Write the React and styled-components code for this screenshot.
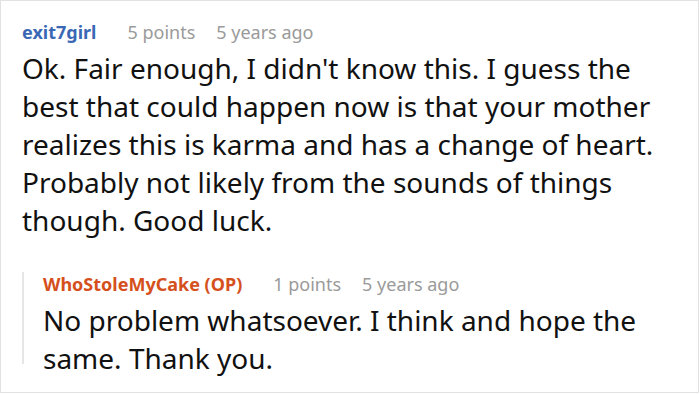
import React from "react";
import styled, { createGlobalStyle } from "styled-components";

const GlobalStyle = createGlobalStyle`
  body {
    margin: 0;
    background: #fff;
    font-family: "Noto Sans", "Open Sans", sans-serif;
  }
`;

const Card = styled.div`
  box-sizing: border-box;
  width: 699px;
  height: 393px;
  border: 1px solid #e2e2e2;
  padding: 19px 0 0 21px;
  overflow: hidden;
`;

const Meta = styled.div`
  display: flex;
  align-items: center;
  height: 24px;
  font-size: 18px;
  line-height: 24px;
  white-space: nowrap;
  margin-top: ${(p) => p.$shift || 0}px;
`;

const Author = styled.span`
  font-weight: 700;
  color: ${(p) => (p.$op ? "#d5501c" : "#3a68b5")};
  margin-right: 31px;
`;

const Info = styled.span`
  color: #9a9a9a;
  margin-right: 21px;
`;

const Body = styled.p`
  margin: 5px 0 0;
  font-size: 28px;
  line-height: 38px;
  color: #111;
  max-width: ${(p) => p.$width}px;
`;

const Reply = styled.div`
  box-sizing: border-box;
  margin-top: 44px;
  height: 92px;
  border-left: 2px solid #e6e6e6;
  padding-left: 19px;
`;

const Comment = ({ author, op, points, age, text, width, shift }) => (
  <>
    <Meta $shift={shift}>
      <Author $op={op}>{author}</Author>
      <Info>{points} points</Info>
      <Info>{age}</Info>
    </Meta>
    <Body $width={width}>{text}</Body>
  </>
);

export default function App() {
  return (
    <>
      <GlobalStyle />
      <Card>
        <Comment
          author="exit7girl"
          points={5}
          age="5 years ago"
          width={655}
          text="Ok. Fair enough, I didn't know this. I guess the best that could happen now is that your mother realizes this is karma and has a change of heart. Probably not likely from the sounds of things though. Good luck."
        />
        <Reply>
          <Comment
            author="WhoStoleMyCake (OP)"
            op
            points={1}
            age="5 years ago"
            width={630}
            shift={-11}
            text="No problem whatsoever. I think and hope the same. Thank you."
          />
        </Reply>
      </Card>
    </>
  );
}
